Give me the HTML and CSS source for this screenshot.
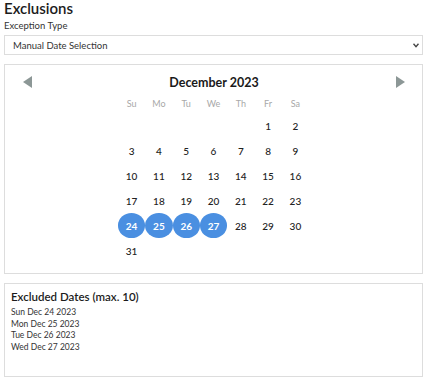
FILE: index.html
```html
<!DOCTYPE html>
<html>
<head>
<meta charset="utf-8">
<link rel="stylesheet" href="styles.css">
</head>
<body>
<div class="wrap">
  <h2 class="title">Exclusions</h2>
  <div class="label">Exception Type</div>
  <div class="select-wrap">
    <select class="select">
      <option>Manual Date Selection</option>
    </select>
    <svg class="chev" width="6" height="5" viewBox="0 0 6 5"><path d="M0.5 0.8 L3 3.6 L5.5 0.8" fill="none" stroke="#444" stroke-width="1.4"/></svg>
  </div>
  <div class="calendar">
    <div class="cal-head">
      <span class="arrow arrow-left"></span>
      <span class="month">December 2023</span>
      <span class="arrow arrow-right"></span>
    </div>
    <div class="grid">
      <div class="wd">Su</div><div class="wd">Mo</div><div class="wd">Tu</div><div class="wd">We</div><div class="wd">Th</div><div class="wd">Fr</div><div class="wd">Sa</div>
      <div class="d"></div><div class="d"></div><div class="d"></div><div class="d"></div><div class="d"></div><div class="d">1</div><div class="d">2</div>
      <div class="d">3</div><div class="d">4</div><div class="d">5</div><div class="d">6</div><div class="d">7</div><div class="d">8</div><div class="d">9</div>
      <div class="d">10</div><div class="d">11</div><div class="d">12</div><div class="d">13</div><div class="d">14</div><div class="d">15</div><div class="d">16</div>
      <div class="d">17</div><div class="d">18</div><div class="d">19</div><div class="d">20</div><div class="d">21</div><div class="d">22</div><div class="d">23</div>
      <div class="d sel">24</div><div class="d sel">25</div><div class="d sel">26</div><div class="d sel">27</div><div class="d">28</div><div class="d">29</div><div class="d">30</div>
      <div class="d">31</div>
    </div>
  </div>
  <div class="excluded">
    <div class="ex-title">Excluded Dates (max. 10)</div>
    <div class="ex-item">Sun Dec 24 2023</div>
    <div class="ex-item">Mon Dec 25 2023</div>
    <div class="ex-item">Tue Dec 26 2023</div>
    <div class="ex-item">Wed Dec 27 2023</div>
  </div>
</div>
</body>
</html>
```
FILE: styles.css
```css
* { box-sizing: border-box; }
html, body { margin: 0; padding: 0; background: #fff; }
body { font-family: Lato, "Open Sans", sans-serif; color: #222; }
.wrap { padding: 0 8px 0 4px; }
.title { margin: 0; font-size: 15px; line-height: 16px; font-weight: 600; color: #1c1c1c; }
.label { margin-top: 4px; font-size: 9.5px; line-height: 12px; color: #333; }
.select-wrap { position: relative; margin-top: 3px; }
.select {
  display: block; width: 100%; height: 20px; margin: 0;
  border: 1px solid #ddd; border-radius: 0; background: #fff;
  -webkit-appearance: none; appearance: none;
  font-family: inherit; font-size: 9.5px; color: #333; padding: 0 0 0 8px;
}
.chev { position: absolute; right: 4px; top: 8px; }
.calendar { margin-top: 9px; height: 210px; border: 1px solid #ddd; padding-top: 8px; }
.cal-head { display: flex; align-items: center; justify-content: space-between; height: 18px; padding: 0 17px 0 18px; }
.arrow { width: 0; height: 0; border-top: 6px solid transparent; border-bottom: 6px solid transparent; }
.arrow-left { border-right: 9px solid #8c9796; }
.arrow-right { border-left: 9px solid #8c9796; }
.month { font-size: 12.5px; font-weight: 700; color: #1a1a1a; }
.grid { display: grid; grid-template-columns: repeat(7, 27.3px); grid-template-rows: 20px; grid-auto-rows: 25px; justify-content: center; margin-top: 2px; }
.wd { display: flex; align-items: center; justify-content: center; font-size: 9px; color: #a8a8a8; }
.d { display: flex; align-items: center; justify-content: center; font-size: 10px; font-weight: 500; color: #222; }
.sel { background: #4a8fe1; color: #fff; border-radius: 50%; font-weight: 700; }
.excluded { margin-top: 9px; height: 94px; border: 1px solid #ddd; padding: 6px 6px; }
.ex-title { font-size: 11.5px; font-weight: 600; color: #1c1c1c; line-height: 14px; margin-bottom: 3px; }
.ex-item { font-size: 8.5px; line-height: 11.7px; color: #333; }
```
